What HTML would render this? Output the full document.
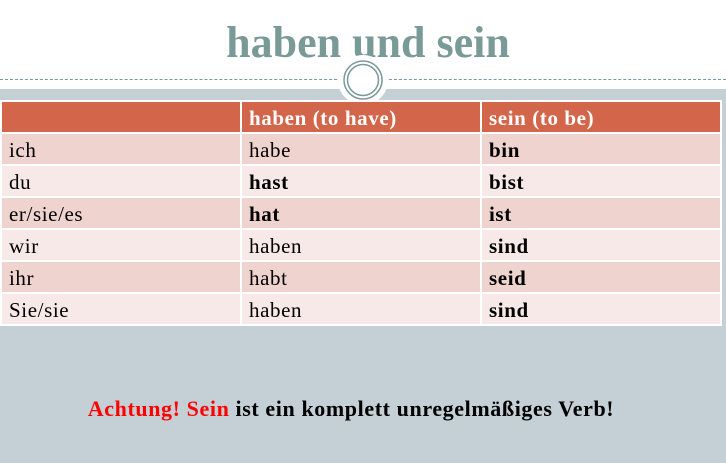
<!DOCTYPE html>
<html><head><meta charset="utf-8"><style>
*{margin:0;padding:0}
body{width:726px;height:463px;position:relative;overflow:hidden;background:#c5d0d6;font-family:"Liberation Serif",serif}
#top{position:absolute;left:0;top:0;width:726px;height:89px;background:#fff}
#title{position:absolute;left:0;width:736px;top:17px;text-align:center;font-size:44px;font-weight:bold;color:#7a9a98}
#line{position:absolute;left:0;top:79px;width:726px;border-top:1px dashed #7a9a98}
table{position:absolute;left:0;top:100px;width:722px;border-collapse:collapse;font-size:21px;letter-spacing:0.6px}
tr{height:32px}
td{border:2px solid #fff;padding:2px 7px 0;vertical-align:middle}
tr.h td{background:#d2654a;color:#fff;font-weight:bold}
tr.a td{background:#efd3cf}
tr.b td{background:#f7e9e7}
#note{position:absolute;left:0;width:702px;top:396px;text-align:center;font-size:22px;letter-spacing:0.6px;font-weight:bold}
</style></head><body>
<div id="top"></div>
<div id="title">haben und sein</div>
<div id="line"></div>
<svg style="position:absolute;left:336px;top:53px" width="54" height="54">
<circle cx="27" cy="27" r="25" fill="#fff"/>
<circle cx="27" cy="27" r="19" fill="none" stroke="#7a9a98" stroke-width="1.5"/>
<circle cx="27" cy="27" r="15.5" fill="none" stroke="#7a9a98" stroke-width="1.5"/>
</svg>
<table>
<colgroup><col style="width:240px"><col style="width:240px"><col></colgroup>
<tr class="h"><td></td><td>haben (to have)</td><td>sein (to be)</td></tr>
<tr class="a"><td>ich</td><td>habe</td><td><b>bin</b></td></tr>
<tr class="b"><td>du</td><td><b>hast</b></td><td><b>bist</b></td></tr>
<tr class="a"><td>er/sie/es</td><td><b>hat</b></td><td><b>ist</b></td></tr>
<tr class="b"><td>wir</td><td>haben</td><td><b>sind</b></td></tr>
<tr class="a"><td>ihr</td><td>habt</td><td><b>seid</b></td></tr>
<tr class="b"><td>Sie/sie</td><td>haben</td><td><b>sind</b></td></tr>
</table>
<div id="note"><span style="color:#f00">Achtung! Sein</span> ist ein komplett unregelmäßiges Verb!</div>
</body></html>
